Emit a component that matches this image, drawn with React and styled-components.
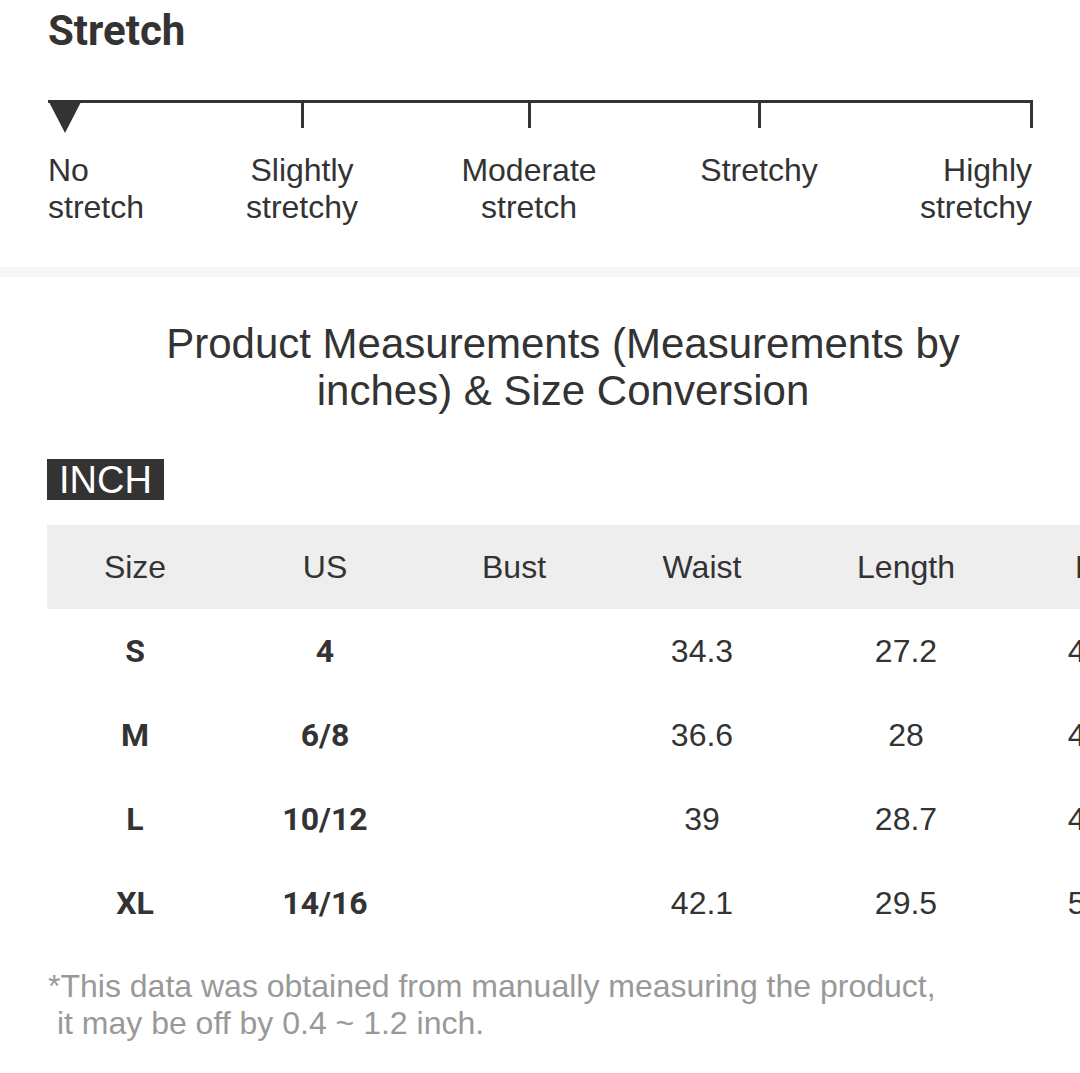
import React from 'react';
import styled, { createGlobalStyle } from 'styled-components';

const GlobalStyle = createGlobalStyle`
  html, body {
    margin: 0;
    padding: 0;
    background: #ffffff;
    overflow: hidden;
  }
  body {
    font-family: "Liberation Sans", Arial, sans-serif;
    color: #333333;
  }
`;

const Page = styled.div`
  width: 1080px;
  min-height: 1073px;
  background: #ffffff;
`;

const StretchSection = styled.section`
  height: 267px;
  padding: 0 48px;
  box-sizing: border-box;
`;

const StretchTitle = styled.h2`
  margin: 0;
  padding-top: 6px;
  font-family: Roboto, "Liberation Sans", sans-serif;
  font-weight: 700;
  font-size: 42px;
  line-height: 50px;
  color: #333333;
`;

const Scale = styled.svg`
  display: block;
  margin-top: 44px;
  overflow: visible;
`;

const LabelRow = styled.div`
  display: grid;
  grid-template-columns: 150px 208px 246px 214px 166px;
  margin-top: 18px;
`;

const ScaleLabel = styled.div`
  font-size: 32px;
  line-height: 37px;
  color: #333333;
  white-space: nowrap;
  text-align: ${(p) => p.$align || 'center'};
`;

const Divider = styled.div`
  height: 10px;
  background: #f6f6f6;
`;

const Heading = styled.h3`
  margin: 0;
  padding: 43px 2px 0 48px;
  font-weight: 400;
  font-size: 42px;
  line-height: 47px;
  text-align: center;
  color: #333333;
`;

const Badge = styled.div`
  display: inline-block;
  margin: 45px 0 0 47px;
  padding: 0 12px 0 12px;
  height: 41px;
  background: #333333;
  color: #ffffff;
  font-size: 38px;
  line-height: 42px;
`;

const TableWrap = styled.div`
  margin: 25px 0 0 47px;
  overflow: hidden;
`;

const Table = styled.table`
  border-collapse: collapse;
  table-layout: fixed;
  width: ${(p) => p.$width}px;
`;

const HeadRow = styled.tr`
  background: #eeeeee;
  height: 84px;
`;

const Th = styled.th`
  width: ${(p) => p.$w}px;
  padding: 0;
  font-weight: 400;
  font-size: 32px;
  color: #333333;
  text-align: center;
  white-space: nowrap;
`;

const Row = styled.tr`
  height: 84px;
`;

const Td = styled.td`
  padding: 0;
  text-align: center;
  font-size: 32px;
  color: #333333;
  white-space: nowrap;
  font-family: ${(p) => (p.$bold ? 'Roboto, "Liberation Sans", sans-serif' : '"Liberation Sans", Arial, sans-serif')};
  font-weight: ${(p) => (p.$bold ? 700 : 400)};
`;

const Note = styled.p`
  margin: 23px 0 0 48px;
  font-size: 32px;
  line-height: 37px;
  color: #999999;
  white-space: pre;
`;

const columns = [
  { key: 'size', label: 'Size', w: 176 },
  { key: 'us', label: 'US', w: 204 },
  { key: 'bust', label: 'Bust', w: 174 },
  { key: 'waist', label: 'Waist', w: 202 },
  { key: 'length', label: 'Length', w: 206 },
  { key: 'hip', label: 'Hip', w: 180 },
];

const tableWidth = columns.reduce((sum, c) => sum + c.w, 0);

const rows = [
  { size: 'S', us: '4', bust: '', waist: '34.3', length: '27.2', hip: '41.3' },
  { size: 'M', us: '6/8', bust: '', waist: '36.6', length: '28', hip: '43.7' },
  { size: 'L', us: '10/12', bust: '', waist: '39', length: '28.7', hip: '46.1' },
  { size: 'XL', us: '14/16', bust: '', waist: '42.1', length: '29.5', hip: '50.4' },
];

const ticks = [254, 481, 711, 983];

function StretchScale() {
  return (
    <Scale width="985" height="34" viewBox="0 0 985 34">
      <rect x="0" y="0" width="985" height="3" fill="#333" />
      {ticks.map((t) => (
        <rect key={t} x={t - 1} y="0" width="3" height="28" fill="#333" />
      ))}
      <polygon points="0,0 34,0 17,33" fill="#333" />
    </Scale>
  );
}

export default function App() {
  return (
    <Page>
      <GlobalStyle />
      <StretchSection>
        <StretchTitle>Stretch</StretchTitle>
        <StretchScale />
        <LabelRow>
          <ScaleLabel $align="left">No<br />stretch</ScaleLabel>
          <ScaleLabel>Slightly<br />stretchy</ScaleLabel>
          <ScaleLabel>Moderate<br />stretch</ScaleLabel>
          <ScaleLabel>Stretchy</ScaleLabel>
          <ScaleLabel $align="right">Highly<br />stretchy</ScaleLabel>
        </LabelRow>
      </StretchSection>
      <Divider />
      <Heading>
        Product Measurements (Measurements by<br />inches) &amp; Size Conversion
      </Heading>
      <Badge>INCH</Badge>
      <TableWrap>
        <Table $width={tableWidth}>
          <thead>
            <HeadRow>
              {columns.map((c) => (
                <Th key={c.key} $w={c.w}>{c.label}</Th>
              ))}
            </HeadRow>
          </thead>
          <tbody>
            {rows.map((r) => (
              <Row key={r.size}>
                {columns.map((c, i) => (
                  <Td key={c.key} $bold={i < 2}>{r[c.key]}</Td>
                ))}
              </Row>
            ))}
          </tbody>
        </Table>
      </TableWrap>
      <Note>{'*This data was obtained from manually measuring the product,\n it may be off by 0.4 ~ 1.2 inch.'}</Note>
    </Page>
  );
}
